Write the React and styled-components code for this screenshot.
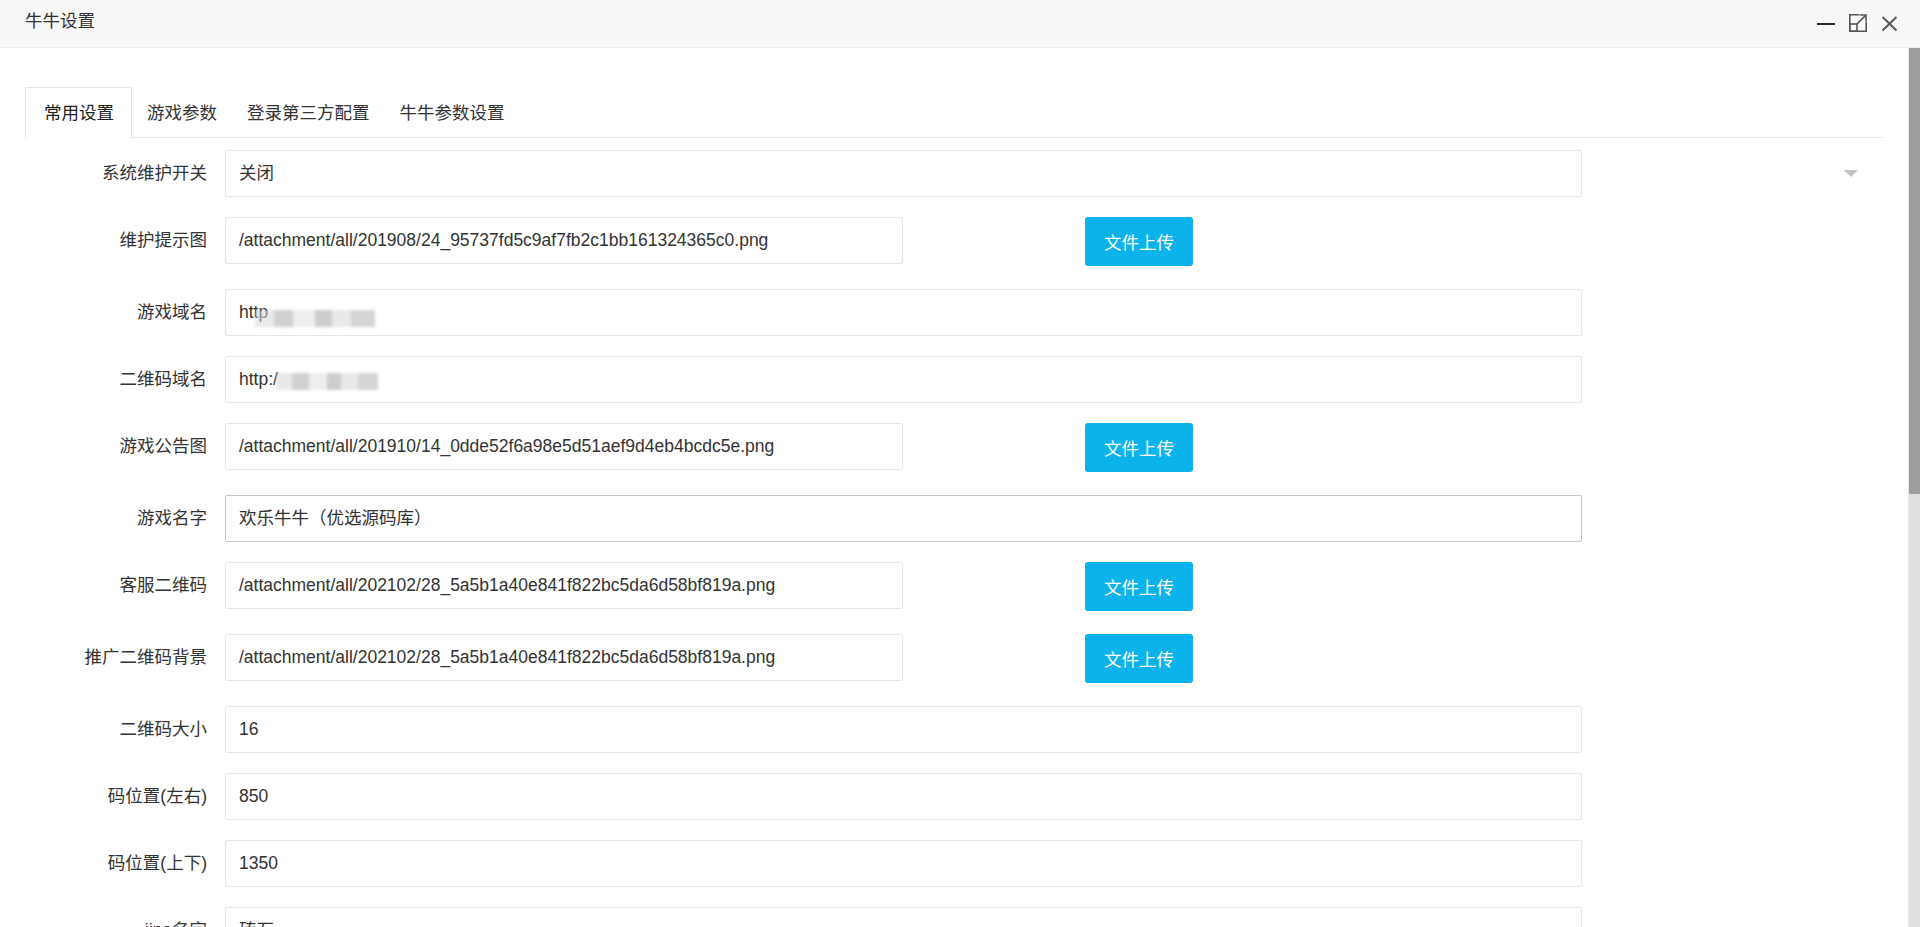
import React from "react";
import styled, { createGlobalStyle, css } from "styled-components";

const Global = createGlobalStyle`
  html, body { margin: 0; padding: 0; background: #fff; }
  body {
    font-family: "Liberation Sans", "Noto Sans CJK SC", sans-serif;
    color: #333;
    overflow: hidden;
  }
  * { box-sizing: border-box; }
`;

const Window = styled.div`
  width: 1920px;
  height: 927px;
  display: flex;
  flex-direction: column;
  background: #fff;
`;

const TitleBar = styled.div`
  height: 48px;
  flex: none;
  display: flex;
  align-items: flex-start;
  background: #f8f8f8;
  border-bottom: 1px solid #eee;
`;

const Title = styled.div`
  padding-left: 25px;
  line-height: 42px;
  font-size: 17.5px;
  color: #333;
`;

const WinControls = styled.div`
  margin-left: auto;
  display: flex;
  gap: 14px;
  padding: 14px 21px 0 0;
`;

const WinIcon = styled.svg`
  width: 18px;
  height: 18px;
  display: block;
  fill: none;
  stroke: ${(p) => p.$color || "#555"};
`;

const Body = styled.div`
  flex: 1;
  display: flex;
  min-height: 0;
`;

const Scroller = styled.div`
  flex: 1;
  overflow: hidden;
  padding: 39px 25px 0 25px;
`;

const ScrollTrack = styled.div`
  width: 12px;
  flex: none;
  background: #e0e0e0;
  border-left: 1px solid #e8e8e8;
`;

const ScrollThumb = styled.div`
  height: 446px;
  background: #9e9e9e;
`;

const TabList = styled.ul`
  list-style: none;
  margin: 0;
  padding: 0;
  display: flex;
  height: 51px;
  border-bottom: 1px solid #e6e6e6;
`;

const Tab = styled.li`
  height: 51px;
  line-height: 50px;
  padding: 0 14px;
  font-size: 17.5px;
  color: #333;
  border: 1px solid transparent;
  border-bottom: none;
  &:first-child {
    padding: 0 17px 0 18px;
  }
  ${(p) =>
    p.$active &&
    css`
      border-color: #e6e6e6;
      border-radius: 2px 2px 0 0;
      background: #fff;
      color: #222;
    `}
`;

const Form = styled.div`
  margin-top: 12px;
  display: flex;
  flex-direction: column;
  gap: 20px;
`;

const Row = styled.div`
  display: grid;
  grid-template-columns: 182px 1fr;
  column-gap: 18px;
  height: ${(p) => (p.$tall ? "52px" : "47px")};
`;

const Label = styled.label`
  text-align: right;
  line-height: 47px;
  font-size: 17.5px;
  color: #333;
  white-space: nowrap;
`;

const Control = styled.div`
  position: relative;
  display: flex;
  align-items: flex-start;
`;

const Field = styled.div`
  height: 47px;
  width: ${(p) => (p.$short ? "678px" : "1357px")};
  border: 1px solid ${(p) => (p.$focused ? "#c6c6c6" : "#e6e6e6")};
  border-radius: 2px;
  padding-left: 13px;
  line-height: 45px;
  font-size: 17.5px;
  color: #333;
  white-space: nowrap;
  overflow: hidden;
  background: #fff;
`;

const UploadButton = styled.button`
  margin-left: 182px;
  width: 108px;
  height: 49px;
  border: none;
  border-radius: 3px;
  background: #0cb3ea;
  color: #fff;
  font-family: inherit;
  font-size: 17.5px;
  padding: 0;
`;

const SelectArrow = styled.span`
  position: absolute;
  right: 25px;
  top: 20px;
  width: 0;
  height: 0;
  border-style: solid;
  border-width: 7px 7.5px 0 7.5px;
  border-color: #c2c2c2 transparent transparent transparent;
`;

const Mosaic = styled.span`
  display: inline-block;
  vertical-align: middle;
  width: ${(p) => p.$w}px;
  height: 17px;
  margin-left: ${(p) => p.$ml || 0}px;
  transform: translateY(${(p) => p.$dy || 0}px);
  background: linear-gradient(
    90deg,
    rgba(215, 215, 215, 0.55) 0 16%,
    rgba(200, 200, 200, 0.85) 16% 32%,
    rgba(236, 236, 236, 0.9) 32% 50%,
    rgba(196, 196, 196, 0.85) 50% 64%,
    rgba(230, 230, 230, 0.9) 64% 80%,
    rgba(205, 205, 205, 0.85) 80% 100%
  );
  filter: blur(1.6px);
`;

const rows = [
  { label: "系统维护开关", value: "关闭", select: true },
  { label: "维护提示图", value: "/attachment/all/201908/24_95737fd5c9af7fb2c1bb161324365c0.png", upload: true },
  { label: "游戏域名", value: "http", mosaic: 120, ml: -13, dy: 5 },
  { label: "二维码域名", value: "http:/", mosaic: 102, ml: -2, dy: 1 },
  { label: "游戏公告图", value: "/attachment/all/201910/14_0dde52f6a98e5d51aef9d4eb4bcdc5e.png", upload: true },
  { label: "游戏名字", value: "欢乐牛牛（优选源码库）", focused: true },
  { label: "客服二维码", value: "/attachment/all/202102/28_5a5b1a40e841f822bc5da6d58bf819a.png", upload: true },
  { label: "推广二维码背景", value: "/attachment/all/202102/28_5a5b1a40e841f822bc5da6d58bf819a.png", upload: true },
  { label: "二维码大小", value: "16" },
  { label: "码位置(左右)", value: "850" },
  { label: "码位置(上下)", value: "1350" },
  { label: "jipe名字", value: "砖石" },
];

const tabs = ["常用设置", "游戏参数", "登录第三方配置", "牛牛参数设置"];

export default function App() {
  return (
    <>
      <Global />
      <Window>
        <TitleBar>
          <Title>牛牛设置</Title>
          <WinControls>
            <WinIcon viewBox="0 0 18 18" $color="#2b2b2b">
              <path d="M0 10H18" strokeWidth="2" />
            </WinIcon>
            <WinIcon viewBox="0 0 18 18" strokeWidth="1.6">
              <path d="M10 0.8H0.8V17.2H17.2V8" />
              <rect x="0.8" y="10" width="7.2" height="7.2" />
              <path d="M8 10L16.6 1.4" />
              <path d="M10.5 1H17V7.5" />
            </WinIcon>
            <WinIcon viewBox="0 0 18 18" strokeWidth="1.9">
              <path d="M1.5 3L15.5 16.5M15.5 3L1.5 16.5" />
            </WinIcon>
          </WinControls>
        </TitleBar>
        <Body>
          <Scroller>
            <TabList>
              {tabs.map((t, i) => (
                <Tab key={t} $active={i === 0}>
                  {t}
                </Tab>
              ))}
            </TabList>
            <Form>
              {rows.map((r) => (
                <Row key={r.label} $tall={r.upload}>
                  <Label>{r.label}</Label>
                  <Control>
                    <Field $short={r.upload} $focused={r.focused}>
                      {r.value}
                      {r.mosaic && <Mosaic $w={r.mosaic} $ml={r.ml} $dy={r.dy} />}
                    </Field>
                    {r.upload && <UploadButton type="button">文件上传</UploadButton>}
                    {r.select && <SelectArrow />}
                  </Control>
                </Row>
              ))}
            </Form>
          </Scroller>
          <ScrollTrack>
            <ScrollThumb />
          </ScrollTrack>
        </Body>
      </Window>
    </>
  );
}
